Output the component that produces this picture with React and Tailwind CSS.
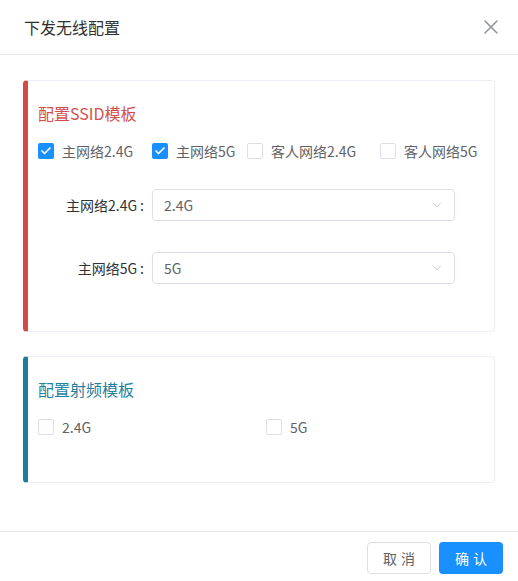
import { X, ChevronDown, Check } from "lucide-react";

const FONT = { fontFamily: '"Noto Sans CJK SC", "Noto Sans", sans-serif' };

function Checkbox({ checked, label, className = "" }) {
  return (
    <label className={`flex items-center gap-2 text-[14px] text-[#606266] ${className}`}>
      {checked ? (
        <span className="w-4 h-4 rounded-[2px] bg-[#1890ff] flex items-center justify-center">
          <Check className="w-3 h-3 text-white" strokeWidth={3.5} />
        </span>
      ) : (
        <span className="w-4 h-4 rounded-[2px] border border-[#dcdfe6] bg-white" />
      )}
      <span className="leading-none">{label}</span>
    </label>
  );
}

function SelectRow({ label, value }) {
  return (
    <div className="flex items-center">
      <span className="w-[106px] text-right text-[14px] text-[#303133]">
        {label}
        <span className="ml-[3px]">:</span>
      </span>
      <div className="ml-[8px] w-[303px] h-[32px] border border-[#dcdfe6] rounded-[4px] flex items-center justify-between pl-[11px] pr-[10px]">
        <span className="text-[14px] text-[#606266]">{value}</span>
        <ChevronDown className="w-3.5 h-3.5 text-[#c0c4cc]" strokeWidth={1.5} />
      </div>
    </div>
  );
}

export default function App() {
  return (
    <div className="w-[518px] h-[581px] bg-white flex flex-col" style={FONT}>
      <header className="h-[55px] border-b border-[#e8e8e8] px-6 flex items-center justify-between">
        <h1 className="text-[16px] text-[#303133] -mt-[1px]">下发无线配置</h1>
        <X className="w-6 h-6 text-[#909399] -mr-[9px]" strokeWidth={1.5} />
      </header>

      <main className="flex-1 px-[23px] pt-[25px] flex flex-col gap-[24px]">
        <section className="h-[252px] border border-[#ebeef5] border-l-[5px] border-l-[#d34b48] rounded-[4px] pl-[10px] pt-[21px]">
          <h2 className="text-[16px] leading-[22px] text-[#d44f4b]">配置SSID模板</h2>
          <div className="flex mt-[19px]">
            <Checkbox checked label="主网络2.4G" className="w-[114px]" />
            <Checkbox checked label="主网络5G" className="w-[95px]" />
            <Checkbox label="客人网络2.4G" className="w-[133px]" />
            <Checkbox label="客人网络5G" />
          </div>
          <div className="mt-[30px] flex flex-col gap-[31px]">
            <SelectRow label="主网络2.4G" value="2.4G" />
            <SelectRow label="主网络5G" value="5G" />
          </div>
        </section>

        <section className="h-[127px] border border-[#ebeef5] border-l-[5px] border-l-[#1a7f9c] rounded-[4px] pl-[10px] pt-[21px]">
          <h2 className="text-[16px] leading-[22px] text-[#1f82a0]">配置射频模板</h2>
          <div className="flex mt-[19px]">
            <Checkbox label="2.4G" className="w-[228px]" />
            <Checkbox label="5G" />
          </div>
        </section>
      </main>

      <footer className="h-[50px] border-t border-[#e8e8e8] flex items-start justify-end gap-2 pr-[15px] pt-[10px]">
        <button className="w-[64px] h-[32px] border border-[#dcdfe6] rounded-[4px] bg-white text-[14px] text-[#606266] tracking-[4px] pl-[4px]">
          取消
        </button>
        <button className="w-[64px] h-[32px] rounded-[4px] bg-[#1890ff] text-[14px] text-white tracking-[4px] pl-[4px]">
          确认
        </button>
      </footer>
    </div>
  );
}
